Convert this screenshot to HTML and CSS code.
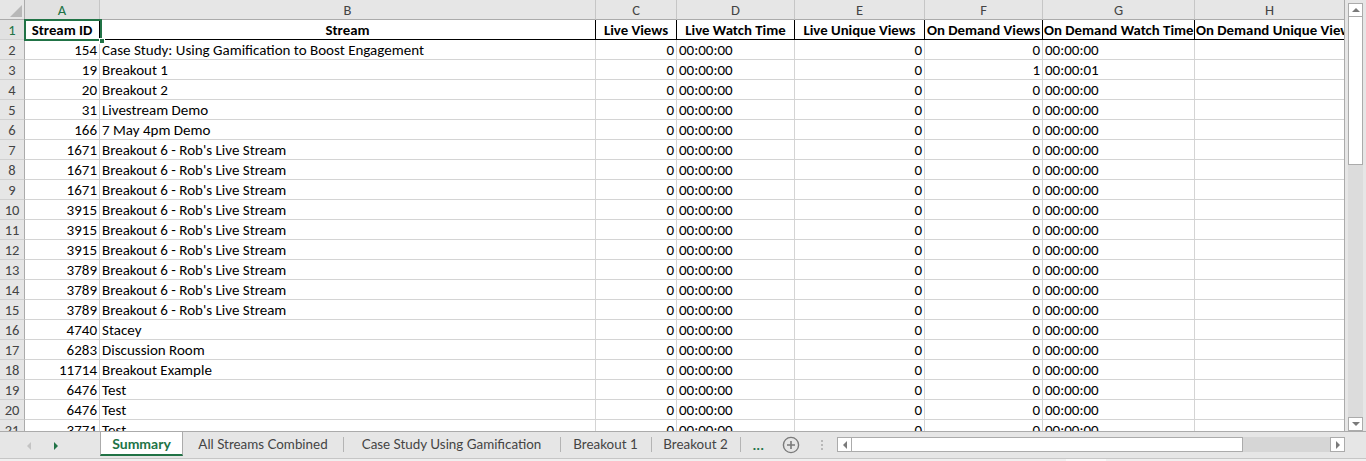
FILE: index.html
```html
<!DOCTYPE html>
<html lang="en">
<head>
<meta charset="utf-8">
<title>Summary</title>
<link rel="stylesheet" href="styles.css">
</head>
<body>
<div class="app">
  <div class="sheet-area">
    <div class="grid-wrap">
      <div class="grid">
        <div class="corner"><span class="tri"></span></div>
        <div class="ch sel">A</div><div class="ch">B</div><div class="ch">C</div><div class="ch">D</div><div class="ch">E</div><div class="ch">F</div><div class="ch">G</div><div class="ch">H</div>

        <div class="rh sel">1</div><div class="hd">Stream ID</div><div class="hd">Stream</div><div class="hd">Live Views</div><div class="hd">Live Watch Time</div><div class="hd">Live Unique Views</div><div class="hd">On Demand Views</div><div class="hd">On Demand Watch Time</div><div class="hd left">On Demand Unique Views</div>

        <div class="rh">2</div><div class="n">154</div><div class="t">Case Study: Using Gamification to Boost Engagement</div><div class="n">0</div><div class="t">00:00:00</div><div class="n">0</div><div class="n">0</div><div class="t">00:00:00</div><div class="e"></div>
        <div class="rh">3</div><div class="n">19</div><div class="t">Breakout 1</div><div class="n">0</div><div class="t">00:00:00</div><div class="n">0</div><div class="n">1</div><div class="t">00:00:01</div><div class="e"></div>
        <div class="rh">4</div><div class="n">20</div><div class="t">Breakout 2</div><div class="n">0</div><div class="t">00:00:00</div><div class="n">0</div><div class="n">0</div><div class="t">00:00:00</div><div class="e"></div>
        <div class="rh">5</div><div class="n">31</div><div class="t">Livestream Demo</div><div class="n">0</div><div class="t">00:00:00</div><div class="n">0</div><div class="n">0</div><div class="t">00:00:00</div><div class="e"></div>
        <div class="rh">6</div><div class="n">166</div><div class="t">7 May 4pm Demo</div><div class="n">0</div><div class="t">00:00:00</div><div class="n">0</div><div class="n">0</div><div class="t">00:00:00</div><div class="e"></div>
        <div class="rh">7</div><div class="n">1671</div><div class="t">Breakout 6 - Rob's Live Stream</div><div class="n">0</div><div class="t">00:00:00</div><div class="n">0</div><div class="n">0</div><div class="t">00:00:00</div><div class="e"></div>
        <div class="rh">8</div><div class="n">1671</div><div class="t">Breakout 6 - Rob's Live Stream</div><div class="n">0</div><div class="t">00:00:00</div><div class="n">0</div><div class="n">0</div><div class="t">00:00:00</div><div class="e"></div>
        <div class="rh">9</div><div class="n">1671</div><div class="t">Breakout 6 - Rob's Live Stream</div><div class="n">0</div><div class="t">00:00:00</div><div class="n">0</div><div class="n">0</div><div class="t">00:00:00</div><div class="e"></div>
        <div class="rh">10</div><div class="n">3915</div><div class="t">Breakout 6 - Rob's Live Stream</div><div class="n">0</div><div class="t">00:00:00</div><div class="n">0</div><div class="n">0</div><div class="t">00:00:00</div><div class="e"></div>
        <div class="rh">11</div><div class="n">3915</div><div class="t">Breakout 6 - Rob's Live Stream</div><div class="n">0</div><div class="t">00:00:00</div><div class="n">0</div><div class="n">0</div><div class="t">00:00:00</div><div class="e"></div>
        <div class="rh">12</div><div class="n">3915</div><div class="t">Breakout 6 - Rob's Live Stream</div><div class="n">0</div><div class="t">00:00:00</div><div class="n">0</div><div class="n">0</div><div class="t">00:00:00</div><div class="e"></div>
        <div class="rh">13</div><div class="n">3789</div><div class="t">Breakout 6 - Rob's Live Stream</div><div class="n">0</div><div class="t">00:00:00</div><div class="n">0</div><div class="n">0</div><div class="t">00:00:00</div><div class="e"></div>
        <div class="rh">14</div><div class="n">3789</div><div class="t">Breakout 6 - Rob's Live Stream</div><div class="n">0</div><div class="t">00:00:00</div><div class="n">0</div><div class="n">0</div><div class="t">00:00:00</div><div class="e"></div>
        <div class="rh">15</div><div class="n">3789</div><div class="t">Breakout 6 - Rob's Live Stream</div><div class="n">0</div><div class="t">00:00:00</div><div class="n">0</div><div class="n">0</div><div class="t">00:00:00</div><div class="e"></div>
        <div class="rh">16</div><div class="n">4740</div><div class="t">Stacey</div><div class="n">0</div><div class="t">00:00:00</div><div class="n">0</div><div class="n">0</div><div class="t">00:00:00</div><div class="e"></div>
        <div class="rh">17</div><div class="n">6283</div><div class="t">Discussion Room</div><div class="n">0</div><div class="t">00:00:00</div><div class="n">0</div><div class="n">0</div><div class="t">00:00:00</div><div class="e"></div>
        <div class="rh">18</div><div class="n">11714</div><div class="t">Breakout Example</div><div class="n">0</div><div class="t">00:00:00</div><div class="n">0</div><div class="n">0</div><div class="t">00:00:00</div><div class="e"></div>
        <div class="rh">19</div><div class="n">6476</div><div class="t">Test</div><div class="n">0</div><div class="t">00:00:00</div><div class="n">0</div><div class="n">0</div><div class="t">00:00:00</div><div class="e"></div>
        <div class="rh">20</div><div class="n">6476</div><div class="t">Test</div><div class="n">0</div><div class="t">00:00:00</div><div class="n">0</div><div class="n">0</div><div class="t">00:00:00</div><div class="e"></div>
        <div class="rh">21</div><div class="n">3771</div><div class="t">Test</div><div class="n">0</div><div class="t">00:00:00</div><div class="n">0</div><div class="n">0</div><div class="t">00:00:00</div><div class="e"></div>
      </div>
      <div class="selection"><span class="handle"></span></div>
    </div>
    <div class="vscroll">
      <div class="sbtn"><span class="arr up"></span></div>
      <div class="vthumb"></div>
      <div class="vtrack"></div>
      <div class="sbtn"><span class="arr down"></span></div>
    </div>
  </div>
  <div class="tabbar">
    <div class="nav">
      <span class="navarr prev"></span>
      <span class="navarr next"></span>
    </div>
    <div class="tab active w1">Summary</div>
    <div class="tab w2">All Streams Combined</div>
    <div class="tab w3">Case Study Using Gamification</div>
    <div class="tab w4">Breakout 1</div>
    <div class="tab w5">Breakout 2</div>
    <div class="more">...</div>
    <div class="add">
      <svg width="18" height="18" viewBox="0 0 18 18"><circle cx="9" cy="9" r="7.6" fill="none" stroke="#7a7a7a" stroke-width="1.4"/><path d="M9 5v8M5 9h8" stroke="#7a7a7a" stroke-width="1.6"/></svg>
    </div>
    <div class="splitter"><span></span><span></span><span></span></div>
    <div class="hscroll">
      <div class="sbtn h"><span class="arr left"></span></div>
      <div class="hthumb"></div>
      <div class="htrack"></div>
      <div class="sbtn h"><span class="arr right"></span></div>
    </div>
  </div>
  <div class="strip"><span class="strip-mark"></span></div>
</div>
</body>
</html>
```
FILE: styles.css
```css
* { box-sizing: border-box; }
html, body { margin: 0; padding: 0; }
body {
  width: 1366px;
  height: 461px;
  overflow: hidden;
  background: #e6e6e6;
  font-family: Carlito, Lato, "Liberation Sans", sans-serif;
  color: #000;
}
.app { display: flex; flex-direction: column; width: 1366px; height: 461px; }

.sheet-area { display: flex; height: 432px; border-bottom: 1px solid #ababab; }
.grid-wrap { position: relative; width: 1345px; height: 431px; overflow: hidden; background: #fff; border-right: 1px solid #ababab; }
.grid {
  display: grid;
  grid-template-columns: 25px 75px 496px 81px 118px 130px 118px 152px 150px;
  grid-auto-rows: 20px;
  font-size: 15px;
  line-height: 20px;
}
.grid > div {
  border-right: 1px solid #d4d4d4;
  border-bottom: 1px solid #d4d4d4;
  white-space: nowrap;
  overflow: hidden;
  padding: 0 2px;
}
.grid > .corner {
  background: #e6e6e6;
  border-right: 1px solid #ababab;
  border-bottom: 1px solid #ababab;
  display: flex;
  align-items: flex-end;
  justify-content: flex-end;
  padding: 0 2px 2px 0;
}
.tri {
  width: 12px; height: 12px;
  background: #b8b8b8;
  clip-path: polygon(100% 0, 100% 100%, 0 100%);
}
.grid > .ch {
  background: #e6e6e6;
  border-right: 1px solid #c6c6c6;
  border-bottom: 1px solid #ababab;
  text-align: center;
  color: #444;
  font-size: 14.5px;
}
.grid > .rh {
  background: #e6e6e6;
  border-right: 1px solid #ababab;
  border-bottom: 1px solid #d0d0d0;
  text-align: center;
  color: #444;
  font-size: 14.5px;
  padding: 0;
}
.grid > .sel { color: #217346; background: #e1e1e1; }
.grid > .hd {
  font-weight: bold;
  font-size: 14.8px;
  text-align: center;
  border-right: 1px solid #000;
  border-bottom: 1px solid #000;
  padding: 0 1px;
}
.grid > .hd.left { text-align: left; border-right-color: #d4d4d4; }
.grid > .n { text-align: right; padding-right: 2px; }
.grid > .t { text-align: left; padding-left: 2px; }

.selection {
  position: absolute;
  left: 24px; top: 19px;
  width: 78px; height: 22px;
  border: 2px solid #217346;
  pointer-events: none;
}
.handle {
  position: absolute;
  right: -5px; bottom: -5px;
  width: 6px; height: 6px;
  background: #217346;
  border: 1px solid #fff;
}

.vscroll {
  width: 21px;
  display: flex;
  flex-direction: column;
  padding: 3px 3px 0 3px;
  background: #e6e6e6;
}
.sbtn {
  height: 14px;
  flex: none;
  background: #fff;
  border: 1px solid #ababab;
  display: flex;
  align-items: center;
  justify-content: center;
}
.vthumb { height: 148px; background: #fff; border: 1px solid #ababab; border-top: none; }
.vtrack { flex: 1; background: #dcdcdc; }
.arr { width: 0; height: 0; border: 4px solid transparent; }
.arr.up { border-bottom: 4px solid #7a7a7a; border-top: none; }
.arr.down { border-top: 4px solid #7a7a7a; border-bottom: none; }
.arr.left { border-right: 4px solid #7a7a7a; border-left: none; }
.arr.right { border-left: 4px solid #7a7a7a; border-right: none; }

.tabbar {
  height: 27px;
  display: flex;
  align-items: stretch;
  background: #e6e6e6;
  border-bottom: 1px solid #c6c6c6;
  font-family: Lato, "Liberation Sans", sans-serif;
  font-size: 13.4px;
  color: #444;
}
.nav { width: 100px; display: flex; align-items: center; padding-left: 27px; gap: 23px; }
.navarr { width: 0; height: 0; border-top: 4px solid transparent; border-bottom: 4px solid transparent; margin-top: 1px; }
.navarr.prev { border-right: 4px solid #c4c4c4; }
.navarr.next { border-left: 4px solid #217346; }
.tab {
  display: flex;
  align-items: center;
  justify-content: center;
  position: relative;
  padding-bottom: 2px;
}
.tab + .tab::before {
  content: "";
  position: absolute;
  left: 0; top: 5px; bottom: 6px;
  width: 1px;
  background: #b4b4b4;
}
.tab.active {
  background: #fff;
  color: #217346;
  font-weight: bold;
  font-size: 14px;
  border-left: 1px solid #ababab;
  border-right: 1px solid #ababab;
  border-bottom: 2px solid #217346;
  margin-bottom: 2px;
  padding-bottom: 0;
}
.tab.active + .tab::before { display: none; }
.w1 { width: 83px; }
.w2 { width: 160px; }
.w3 { width: 217px; }
.w4 { width: 91px; }
.w5 { width: 90px; border-right: 1px solid transparent; }
.w5::after {
  content: "";
  position: absolute;
  right: -1px; top: 5px; bottom: 6px;
  width: 1px;
  background: #b4b4b4;
}
.more {
  width: 35px;
  display: flex;
  align-items: center;
  justify-content: center;
  color: #217346;
  font-weight: bold;
  font-size: 14px;
  letter-spacing: 0.5px;
  padding-bottom: 2px;
}
.add { width: 30px; display: flex; align-items: center; justify-content: center; padding-bottom: 1px; }
.splitter {
  width: 31px;
  display: flex;
  flex-direction: column;
  align-items: center;
  justify-content: center;
  gap: 2px;
  padding-bottom: 1px;
}
.splitter span { width: 2px; height: 2px; background: #b8b8b8; }
.hscroll {
  width: 508px;
  display: flex;
  align-items: center;
  padding-bottom: 1px;
}
.sbtn.h { width: 15px; height: 15px; }
.hthumb { width: 391px; height: 15px; background: #fff; border: 1px solid #ababab; border-left: none; }
.htrack { flex: 1; height: 15px; background: #d6d6d6; }

.strip { flex: 1; background: #f0f0f0; position: relative; }
.strip-mark { position: absolute; left: 1066px; top: 0; width: 40px; height: 2px; background: #fafafa; }
```
